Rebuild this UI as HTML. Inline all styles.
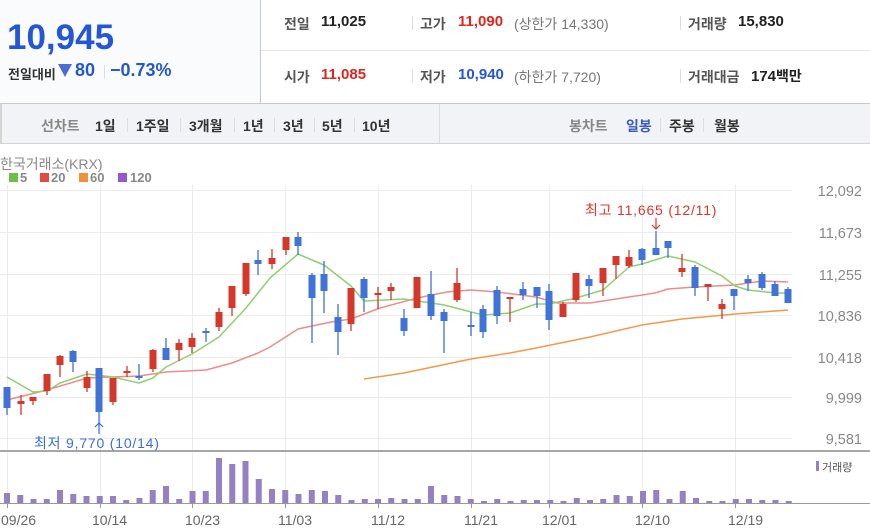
<!DOCTYPE html>
<html><head><meta charset="utf-8"><style>
*{margin:0;padding:0;box-sizing:border-box}
body{width:870px;height:532px;background:#fff;font-family:"Liberation Sans","Noto Sans CJK KR",sans-serif;position:relative;overflow:hidden}
.a{position:absolute;white-space:nowrap}
.lb{color:#555;font-size:14px;font-weight:bold}
.v{color:#222;font-size:15px;font-weight:bold}
.pipe{position:absolute;width:1px;height:14px;background:#ddd}
.tb{font-size:14px;font-weight:bold;color:#333}
</style></head><body>
<div class="a" style="left:0;top:0;width:261px;height:104px;background:#fafbfc;border-right:1px solid #c8c8c8"></div>
<div class="a" style="left:261px;top:50px;width:609px;height:1px;background:#e6e6e6"></div>
<div class="a" style="left:7px;top:18px;font-size:35px;font-weight:bold;color:#2456d6;letter-spacing:0px">10,945</div>
<div class="a" style="left:8px;top:64px;font-size:13px;font-weight:bold;color:#333">전일대비</div>
<div class="a" style="left:58px;top:64px;width:0;height:0;border-left:7px solid transparent;border-right:7px solid transparent;border-top:13px solid #4a6fd0"></div>
<div class="a" style="left:75px;top:60px;font-size:18px;font-weight:bold;color:#2456d6">80</div>
<div class="pipe" style="left:104px;top:65px"></div>
<div class="a" style="left:110px;top:60px;font-size:18px;font-weight:bold;color:#2456d6">−0.73%</div>

<div class="a lb" style="left:284px;top:14px">전일</div><div class="a v" style="left:321px;top:13px">11,025</div>
<div class="pipe" style="left:412px;top:16px"></div>
<div class="a lb" style="left:420px;top:14px">고가</div><div class="a" style="left:458px;top:13px;font-size:15px;font-weight:bold;color:#e0251c">11,090</div>
<div class="a" style="left:514px;top:14px;font-size:14px;color:#777">(상한가 14,330)</div>
<div class="pipe" style="left:680px;top:16px"></div>
<div class="a lb" style="left:688px;top:14px">거래량</div><div class="a v" style="left:738px;top:13px">15,830</div>

<div class="a lb" style="left:284px;top:67px">시가</div><div class="a" style="left:321px;top:66px;font-size:15px;font-weight:bold;color:#e0251c">11,085</div>
<div class="pipe" style="left:412px;top:69px"></div>
<div class="a lb" style="left:420px;top:67px">저가</div><div class="a" style="left:458px;top:66px;font-size:15px;font-weight:bold;color:#2456d6">10,940</div>
<div class="a" style="left:514px;top:67px;font-size:14px;color:#777">(하한가 7,720)</div>
<div class="pipe" style="left:680px;top:69px"></div>
<div class="a lb" style="left:688px;top:67px">거래대금</div><div class="a v" style="left:751px;top:66px">174<span style="font-size:14px">백만</span></div>

<div class="a" style="left:0;top:103px;width:870px;height:41px;background:#f2f3f6;border-top:1px solid #c9c9c9;border-bottom:1px solid #d4d4d4;border-left:2px solid #d4d4d4"></div>
<div class="a" style="left:439px;top:104px;width:1px;height:39px;background:#dcdcdc"></div>
<div class="a tb" style="left:41px;top:116px;color:#888">선차트</div>
<div class="a tb" style="left:95px;top:116px">1일</div><div class="pipe" style="left:127px;top:118px"></div>
<div class="a tb" style="left:136px;top:116px">1주일</div><div class="pipe" style="left:180px;top:118px"></div>
<div class="a tb" style="left:189px;top:116px">3개월</div><div class="pipe" style="left:234px;top:118px"></div>
<div class="a tb" style="left:243px;top:116px">1년</div><div class="pipe" style="left:274px;top:118px"></div>
<div class="a tb" style="left:283px;top:116px">3년</div><div class="pipe" style="left:314px;top:118px"></div>
<div class="a tb" style="left:322px;top:116px">5년</div><div class="pipe" style="left:354px;top:118px"></div>
<div class="a tb" style="left:362px;top:116px">10년</div>
<div class="a tb" style="left:569px;top:116px;color:#888">봉차트</div>
<div class="a tb" style="left:626px;top:116px;color:#3a5bc0">일봉</div><div class="pipe" style="left:660px;top:118px"></div>
<div class="a tb" style="left:669px;top:116px">주봉</div><div class="pipe" style="left:703px;top:118px"></div>
<div class="a tb" style="left:714px;top:116px">월봉</div>

<div class="a" style="left:0;top:154px;font-size:14px;color:#888">한국거래소(KRX)</div>
<svg class="a" style="left:0;top:0" width="870" height="532" font-family="Liberation Sans, Noto Sans CJK KR, sans-serif">
<g font-size="13" font-weight="bold" fill="#888">
<rect x="9" y="173" width="9" height="9" fill="#6cc04a"/><text x="20" y="182">5</text>
<rect x="40" y="173" width="9" height="9" fill="#e04a3f"/><text x="51" y="182">20</text>
<rect x="79" y="173" width="9" height="9" fill="#f0913a"/><text x="90" y="182">60</text>
<rect x="118" y="173" width="9" height="9" fill="#9656cc"/><text x="130" y="182">120</text>
</g>
<g stroke="#ececec" stroke-width="1">
<line x1="0" y1="190.5" x2="792" y2="190.5"/><line x1="0" y1="232.5" x2="792" y2="232.5"/><line x1="0" y1="274.5" x2="792" y2="274.5"/><line x1="0" y1="315.5" x2="792" y2="315.5"/><line x1="0" y1="357.5" x2="792" y2="357.5"/><line x1="0" y1="397.5" x2="792" y2="397.5"/><line x1="0" y1="438.5" x2="792" y2="438.5"/>
<g><line x1="7.5" y1="185" x2="7.5" y2="450"/><line x1="100.5" y1="185" x2="100.5" y2="450"/><line x1="192.5" y1="185" x2="192.5" y2="450"/><line x1="285.5" y1="185" x2="285.5" y2="450"/><line x1="378.5" y1="185" x2="378.5" y2="450"/><line x1="471.5" y1="185" x2="471.5" y2="450"/><line x1="549.5" y1="185" x2="549.5" y2="450"/><line x1="642.5" y1="185" x2="642.5" y2="450"/><line x1="735.5" y1="185" x2="735.5" y2="450"/></g>
<g transform="translate(0,267)"><line x1="7.5" y1="185" x2="7.5" y2="236"/><line x1="100.5" y1="185" x2="100.5" y2="236"/><line x1="192.5" y1="185" x2="192.5" y2="236"/><line x1="285.5" y1="185" x2="285.5" y2="236"/><line x1="378.5" y1="185" x2="378.5" y2="236"/><line x1="471.5" y1="185" x2="471.5" y2="236"/><line x1="549.5" y1="185" x2="549.5" y2="236"/><line x1="642.5" y1="185" x2="642.5" y2="236"/><line x1="735.5" y1="185" x2="735.5" y2="236"/></g>
</g>
<g font-size="14.5" fill="#888" text-anchor="end">
<text x="862" y="196">12,092</text><text x="862" y="238">11,673</text><text x="862" y="280">11,255</text><text x="862" y="321">10,836</text><text x="862" y="363">10,418</text><text x="862" y="403">9,999</text><text x="862" y="444">9,581</text>
</g>
<g fill="none" stroke-width="1.5" stroke-linejoin="round">
<polyline stroke="#f29a4a" points="364,379 404,373 471,359 510,353 536,348 590,337 642,325 682,319 735,314 788,310"/>
<polyline stroke="#ec8c8c" points="7,400 47,390 87,378 139,376 166,372 206,370 232,363 258,353 270,347 298,329 331,322 351,319 380,308 417,298 447,292 471,290 497,292 536,297 557,303 590,303 616,299 655,293 668,289 695,287 735,285 762,281 788,282"/>
<polyline stroke="#8fd070" points="7,377 33,392 47,391 60,383 87,374 113,377 139,383 153,378 166,367 192,354 219,337 246,308 270,278 298,254 324,265 351,286 364,301 404,299 431,303 444,305 483,315 510,313 536,304 549,304 576,298 603,290 629,267 642,264 668,256 695,262 722,276 735,286 748,290 775,293 788,293"/>
</g>
<g id="c"></g>
<g font-size="14" letter-spacing="0.8">
<text x="585" y="215" fill="#e0362b">최고 11,665 (12/11)</text>
<text x="34" y="448" fill="#3a6fd8">최저 9,770 (10/14)</text>
</g>
<path d="M656 218V229M652 225L656 229L660 225" stroke="#e0362b" fill="none" stroke-width="1.2"/>
<path d="M99 434V423M95 427L99 423L103 427" stroke="#3a6fd8" fill="none" stroke-width="1.2"/>
<line x1="0" y1="451" x2="870" y2="451" stroke="#888" stroke-width="1.5"/>
<line x1="0" y1="503.5" x2="870" y2="503.5" stroke="#999" stroke-width="1"/>
<rect x="816" y="461" width="3" height="10" fill="#9580c4"/>
<text x="822" y="471" font-size="11" fill="#555">거래량</text>
<g id="vb" fill="#9580c4"></g>
<g stroke="#999"><line x1="7.5" y1="503" x2="7.5" y2="508"/><line x1="100.5" y1="503" x2="100.5" y2="508"/><line x1="192.5" y1="503" x2="192.5" y2="508"/><line x1="285.5" y1="503" x2="285.5" y2="508"/><line x1="378.5" y1="503" x2="378.5" y2="508"/><line x1="471.5" y1="503" x2="471.5" y2="508"/><line x1="549.5" y1="503" x2="549.5" y2="508"/><line x1="642.5" y1="503" x2="642.5" y2="508"/><line x1="735.5" y1="503" x2="735.5" y2="508"/></g>
<g font-size="14" fill="#666">
<text x="1" y="525">09/26</text><text x="92" y="525">10/14</text><text x="185" y="525">10/23</text><text x="278" y="525">11/03</text><text x="371" y="525">11/12</text><text x="464" y="525">11/21</text><text x="542" y="525">12/01</text><text x="635" y="525">12/10</text><text x="728" y="525">12/19</text>
</g>
</svg>
<script>
var C=[[7,0,387,408,387,415],[21,1,401,404,395,415],[33,1,397,401,397,405],[47,1,374,391,374,395],[60,1,356,365,355,377],[73,0,351,362,350,372],[87,1,377,388,371,392],[99,0,368,412,368,425],[113,1,378,402,378,405],[127,1,371,373,366,377],[139,0,376,378,364,380],[153,1,350,369,349,372],[166,0,348,360,338,360],[179,1,343,350,339,361],[192,1,338,347,333,353],[206,0,331,333,328,342],[219,1,312,327,308,331],[232,1,286,308,286,316],[246,1,263,294,263,296],[258,0,260,264,250,275],[272,1,258,264,249,269],[286,1,237,250,237,255],[298,0,237,246,232,255],[312,0,275,298,273,343],[324,0,274,291,261,313],[338,0,317,332,304,355],[351,1,288,324,288,331],[364,0,279,298,277,312],[378,1,293,295,287,309],[391,1,287,291,283,300],[404,0,318,331,309,336],[417,1,277,308,277,308],[431,0,294,316,271,320],[444,0,312,321,309,353],[457,1,283,300,268,302],[471,0,325,327,312,336],[483,0,309,332,305,338],[497,0,290,316,286,324],[510,1,297,299,297,322],[523,0,289,295,282,300],[537,0,287,296,287,308],[549,0,291,320,284,330],[563,1,304,317,302,317],[576,1,273,300,273,302],[589,0,279,286,275,298],[603,1,268,283,268,296],[616,1,256,265,256,279],[629,1,257,266,250,268],[642,0,249,260,248,265],[656,0,248,255,231,255],[668,0,241,248,241,258],[682,1,268,272,254,277],[695,0,267,288,265,296],[708,1,284,287,284,301],[722,1,304,309,299,319],[734,0,289,296,289,310],[748,0,279,283,275,291],[762,0,274,288,272,290],[775,0,284,296,281,296],[788,0,289,303,287,303]];
var V=[10,8,4,4,13,9,7,7,7,3,5,13,17,4,12,12,45,39,42,24,14,13,9,13,12,8,3,4,4,5,4,4,17,8,7,4,2,4,2,3,3,3,2,5,3,4,8,7,12,13,4,12,5,2,2,4,4,3,3,2];
var ns="http://www.w3.org/2000/svg",g=document.getElementById("c"),vb=document.getElementById("vb");
function el(t,a,p){var e=document.createElementNS(ns,t);for(var k in a)e.setAttribute(k,a[k]);p.appendChild(e);}
C.forEach(function(d){var col=d[1]?"#d5382b":"#3f73d8";
el("line",{x1:d[0],x2:d[0],y1:d[4],y2:d[5],stroke:col,"stroke-width":1.3},g);
el("rect",{x:d[0]-3.5,y:d[2],width:7,height:Math.max(2,d[3]-d[2]),fill:col},g);});
V.forEach(function(h,i){var x=7+i*13.25;el("rect",{x:x-3,y:503-h,width:6,height:h},vb);});
</script>
</body></html>
